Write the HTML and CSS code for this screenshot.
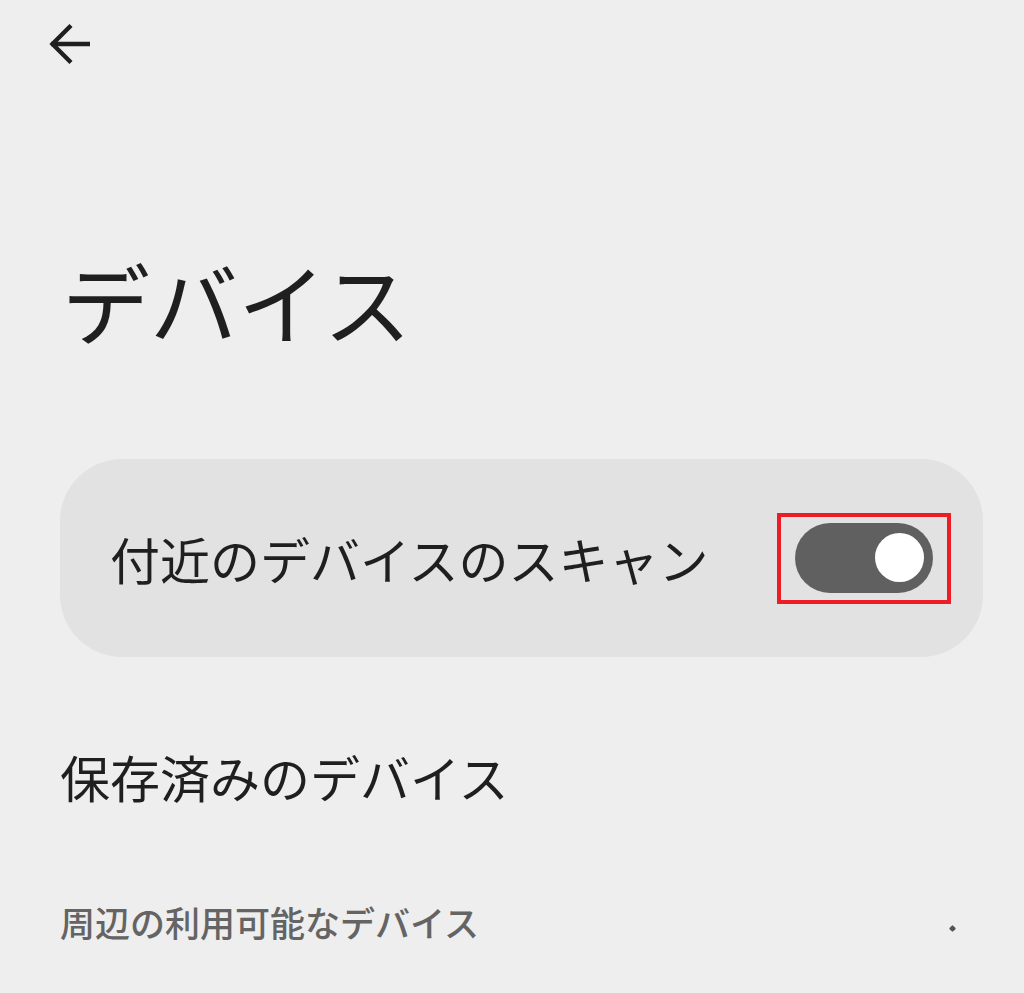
FILE: index.html
```html
<!DOCTYPE html>
<html lang="ja">
<head>
<meta charset="utf-8">
<title>デバイス</title>
<link rel="stylesheet" href="styles.css">
</head>
<body>
<div class="page">
  <header class="topbar">
    <svg class="back" width="48" height="48" viewBox="0 0 48 48" aria-label="戻る">
      <path d="M5 24 H44" fill="none" stroke="#1f1f1f" stroke-width="4.4"/>
      <path d="M25 5.5 L6.5 24 L25 42.5" fill="none" stroke="#1f1f1f" stroke-width="4.4" stroke-linejoin="miter"/>
    </svg>
  </header>
  <h1 class="title">デバイス</h1>
  <div class="card">
    <span class="card-label">付近のデバイスのスキャン</span>
    <div class="highlight">
      <div class="switch"><div class="knob"></div></div>
    </div>
  </div>
  <div class="item">保存済みのデバイス</div>
  <div class="section">
    <span class="section-label">周辺の利用可能なデバイス</span>
    <span class="dot"></span>
  </div>
</div>
</body>
</html>
```
FILE: styles.css
```css
html, body {
  margin: 0;
  padding: 0;
  background: #eeeeee;
}
body {
  width: 1024px;
  height: 993px;
  overflow: hidden;
  font-family: "Noto Sans CJK JP", "Noto Sans", sans-serif;
  color: #1f1f1f;
}
.page {
  padding: 0 41px 0 60px;
}
.topbar {
  height: 88px;
  display: flex;
  align-items: flex-start;
  padding-top: 20px;
  box-sizing: border-box;
  margin-left: -14px;
}
.back {
  display: block;
}
.title {
  margin: 168px 0 0 2px;
  font-size: 88px;
  font-weight: 400;
  line-height: 1;
}
.card {
  margin-top: 115px;
  height: 198px;
  background: #e2e2e2;
  border-radius: 62px;
  display: flex;
  align-items: center;
  justify-content: space-between;
  padding: 0 32px 0 50px;
}
.card-label {
  font-size: 50px;
  line-height: 1;
}
.highlight {
  border: 4px solid #ee1c25;
  padding: 6px 14px 7px 14px;
}
.switch {
  width: 138px;
  height: 70px;
  border-radius: 35px;
  background: #606060;
  display: flex;
  align-items: center;
  justify-content: flex-end;
  padding-right: 9px;
  box-sizing: border-box;
}
.knob {
  width: 49px;
  height: 49px;
  border-radius: 50%;
  background: #ffffff;
}
.item {
  margin-top: 94px;
  font-size: 50px;
  line-height: 1;
}
.section {
  margin-top: 103px;
  display: flex;
  align-items: center;
  justify-content: space-between;
  padding-right: 28px;
}
.section-label {
  font-size: 35px;
  line-height: 1;
  color: #646464;
  font-weight: 500;
}
.dot {
  width: 5px;
  height: 5px;
  background: #555555;
  border-radius: 1px;
  transform: rotate(45deg);
  margin-top: 14px;
}
```
